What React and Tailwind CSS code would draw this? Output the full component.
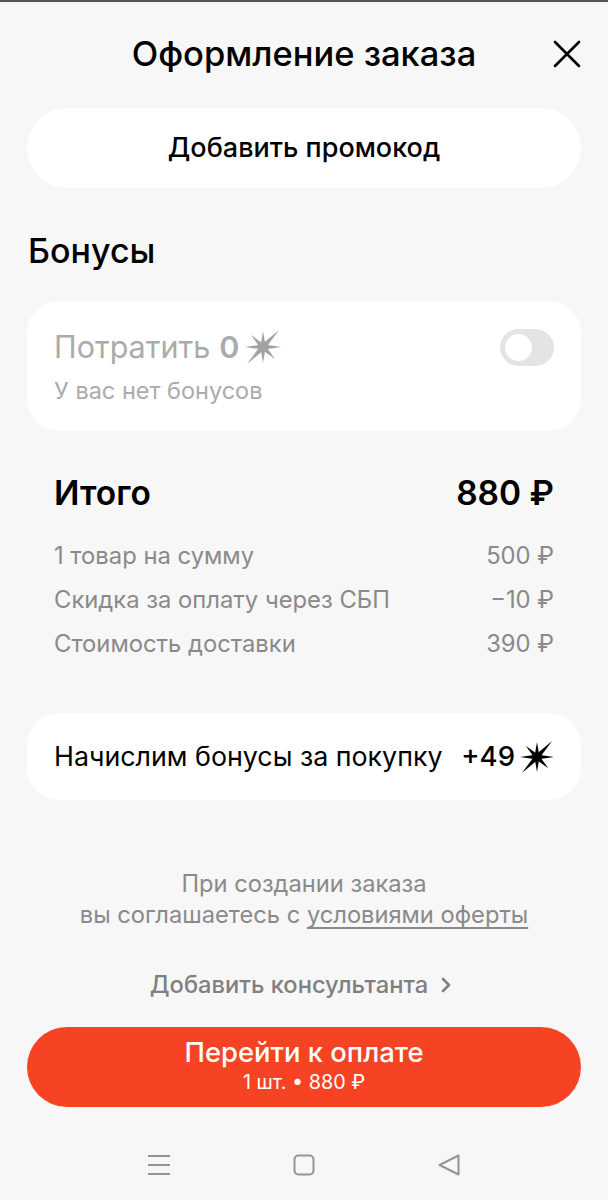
function Spark({ color, size = 36 }) {
  // eight point star used for bonuses
  const rays = [
    [18, 18, 0, 18, 2.7],
    [18, 18, 36, 18, 2.7],
    [18, 18, 18, 2, 2.7],
    [18, 18, 18, 34, 2.7],
    [18, 18, 34, 1, 2.8],
    [18, 18, 2, 35, 2.8],
    [18, 18, 30, 30, 2.8],
    [18, 18, 6, 6, 2.8],
  ]
  return (
    <svg width={size} height={size} viewBox="0 0 36 36" fill={color}>
      {rays.map(([x1, y1, x2, y2, w], i) => {
        const dx = x2 - x1
        const dy = y2 - y1
        const len = Math.hypot(dx, dy)
        const nx = (-dy / len) * w
        const ny = (dx / len) * w
        return (
          <polygon
            key={i}
            points={`${x1 + nx},${y1 + ny} ${x2},${y2} ${x1 - nx},${y1 - ny}`}
          />
        )
      })}
      <circle cx="18" cy="18" r="4.5" />
    </svg>
  )
}

function Row({ label, value }) {
  return (
    <div className="flex justify-between items-center h-[44px] text-[23.8px] text-[#8a8a8a]">
      <span>{label}</span>
      <span>{value}</span>
    </div>
  )
}

export default function App() {
  return (
    <div className="w-[608px] h-[1200px] bg-[#f7f7f7] border-t-2 border-[#555555] flex flex-col px-[27px] text-black font-['Inter','Noto_Sans',sans-serif] overflow-hidden">

      {/* Header */}
      <div className="relative h-[106px] pb-[2px] shrink-0 flex items-center justify-center">
        <h1 className="text-[34.5px] font-medium">Оформление заказа</h1>
        <svg className="absolute right-0 top-[38px]" width="28" height="28" viewBox="0 0 28 28" fill="none" stroke="#000" strokeWidth="2.6" strokeLinecap="round">
          <path d="M2 2 L26 26 M26 2 L2 26" />
        </svg>
      </div>

      {/* Promo */}
      <button className="h-[80px] shrink-0 rounded-[40px] bg-white text-[27px] font-medium">
        Добавить промокод
      </button>

      <h2 className="mt-[43px] h-[40px] leading-[40px] pl-[1px] text-[34px] font-medium">Бонусы</h2>

      {/* Bonuses card */}
      <div className="mt-[30px] h-[130px] shrink-0 rounded-[32px] bg-white px-[27px] pt-[26px] flex justify-between">
        <div>
          <div className="flex items-center h-[40px] text-[30.5px] text-[#ababab]">
            <span>Потратить</span>
            <span className="ml-[9px] font-semibold">0</span>
            <span className="ml-[6px]"><Spark color="#a3a3a3" size={36} /></span>
          </div>
          <div className="mt-[6px] text-[23.5px] text-[#ababab]">У вас нет бонусов</div>
        </div>
        <div className="mt-[2px] w-[54px] h-[37px] rounded-full bg-[#e4e4e4] pl-[5px] flex items-center">
          <div className="w-[27px] h-[27px] rounded-full bg-white" />
        </div>
      </div>

      {/* Totals */}
      <div className="px-[27px] mt-[38px]">
        <div className="flex justify-between items-center h-[48px] text-[33.5px] font-semibold">
          <span>Итого</span>
          <span>880 ₽</span>
        </div>
        <div className="mt-[17px]">
          <Row label="1 товар на сумму" value="500 ₽" />
          <Row label="Скидка за оплату через СБП" value="−10 ₽" />
          <Row label="Стоимость доставки" value="390 ₽" />
        </div>
      </div>

      {/* Earned bonuses */}
      <div className="mt-[47px] h-[87px] shrink-0 rounded-[32px] bg-white px-[27px] flex justify-between items-center text-[26.8px]">
        <span>Начислим бонусы за покупку</span>
        <span className="flex items-center font-medium text-[27.5px]">
          +49
          <span className="ml-[5px]"><Spark color="#000" size={34} /></span>
        </span>
      </div>

      {/* Offer */}
      <p className="mt-[68px] text-center text-[23.7px] leading-[31px] text-[#8a8a8a]">
        При создании заказа
        <br />
        вы соглашаетесь с <span className="underline underline-offset-4 [text-decoration-skip-ink:none]">условиями оферты</span>
      </p>

      <div className="mt-[39px] pr-[7px] flex justify-center items-center h-[32px] text-[23.7px] font-medium text-[#808080]">
        Добавить консультанта
        <svg className="ml-[13px]" width="10" height="16" viewBox="0 0 10 16" fill="none" stroke="#808080" strokeWidth="2.6" strokeLinecap="round" strokeLinejoin="round">
          <path d="M2 2 L8 8 L2 14" />
        </svg>
      </div>

      {/* Pay */}
      <button className="mt-[26px] h-[80px] shrink-0 rounded-[40px] bg-[#f54323] text-white flex flex-col items-center justify-center">
        <span className="text-[27.4px] leading-[30px] font-medium">Перейти к оплате</span>
        <span className="text-[19.8px] leading-[30px]">1 шт. • 880 ₽</span>
      </button>

      {/* System nav */}
      <div className="mt-[42px] h-[32px] shrink-0">
        <div className="flex justify-between items-center h-full px-[121px]">
          <svg width="22" height="22" viewBox="0 0 22 22" stroke="#949494" strokeWidth="2" fill="none">
            <path d="M0 2 H22 M0 11 H22 M0 20 H22" />
          </svg>
          <svg width="22" height="22" viewBox="0 0 22 22" stroke="#949494" strokeWidth="2" fill="none">
            <rect x="1.5" y="1.5" width="19" height="19" rx="4" />
          </svg>
          <svg width="22" height="22" viewBox="0 0 22 22" stroke="#949494" strokeWidth="2" fill="none" strokeLinejoin="round">
            <path d="M1.5 11 L20.5 1.5 V20.5 Z" />
          </svg>
        </div>
      </div>
    </div>
  )
}
